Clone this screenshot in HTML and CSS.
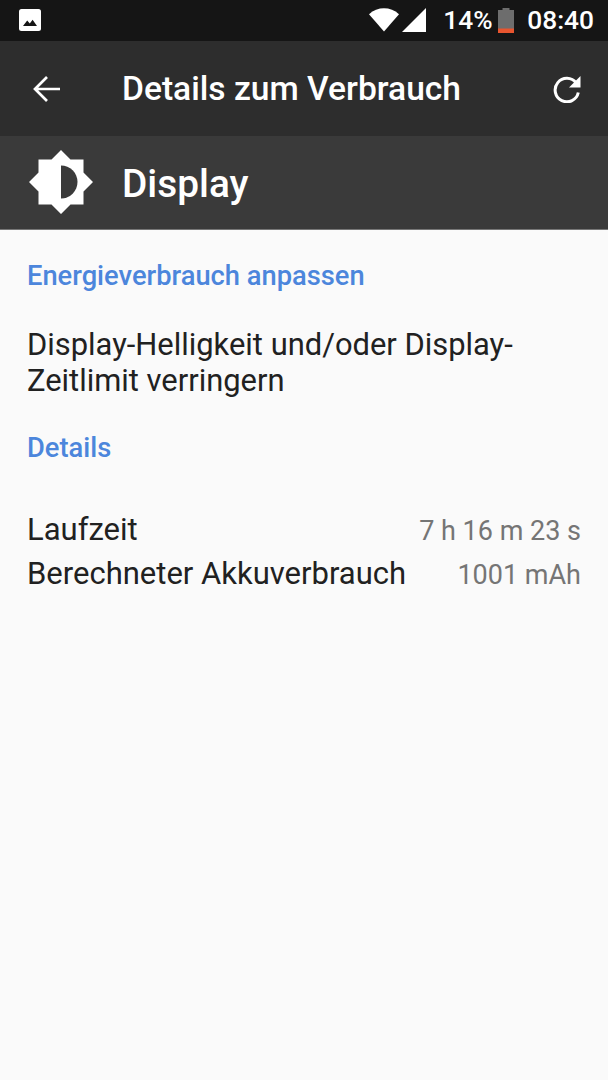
FILE: index.html
```html
<!DOCTYPE html>
<html lang="de">
<head>
<meta charset="utf-8">
<title>Details zum Verbrauch</title>
<link rel="stylesheet" href="styles.css">
</head>
<body>
<div class="statusbar">
  <svg class="ic-image" width="22" height="22" viewBox="0 0 22 22"><rect width="22" height="22" rx="2.5" fill="#fff"/><path d="M4 17 L8.2 11.5 L10.8 14.4 L13.6 10.8 L18 17 Z" fill="#151515"/></svg>
  <div class="status-right">
    <svg class="ic-wifi" width="30" height="24" viewBox="0 0 30 24"><path d="M0 6.2 C8.5 -1.6 21.5 -1.6 30 6.2 L15 23.5 Z" fill="#fff"/></svg>
    <svg class="ic-signal" width="24" height="24" viewBox="0 0 24 24"><path d="M0 24 L24 0 V24 Z" fill="#fff"/></svg>
    <span class="pct">14%</span>
    <svg class="ic-batt" width="16" height="25" viewBox="0 0 16 25"><path d="M4.5 0 H11.5 V2 H16 V25 H0 V2 H4.5 Z" fill="#6d6d6d"/><rect y="20.500" width="16" height="4.500" fill="#e8552f"/></svg>
    <span class="clock">08:40</span>
  </div>
</div>
<header class="toolbar">
  <svg class="ic-back" width="28" height="28" viewBox="0 0 28 28"><path d="M27 14 H2.500 M14 2 L2 14 L14 26" fill="none" stroke="#fff" stroke-width="2.700"/></svg>
  <h1 class="title">Details zum Verbrauch</h1>
  <svg class="ic-refresh" width="28" height="28" viewBox="0 0 28 28"><path d="M23.200 8 A11.700 11.700 0 1 0 25.300 17.500" fill="none" stroke="#fff" stroke-width="3"/><path d="M27.500 1 V12.500 H16 Z" fill="#fff"/></svg>
</header>
<section class="appbar">
  <svg class="ic-sun" width="64" height="64" viewBox="0 0 64 64"><path d="M32 0 L41.500 9.500 H54.500 V22.500 L64 32 L54.500 41.500 V54.500 H41.500 L32 64 L22.500 54.500 H9.500 V41.500 L0 32 L9.500 22.500 V9.500 H22.500 Z" fill="#fff"/><path d="M32 15.500 A16.500 16.500 0 0 1 32 48.500 Z" fill="#3a3a3a"/></svg>
  <h2 class="app-name">Display</h2>
</section>
<main class="content">
  <h3 class="section-head first">Energieverbrauch anpassen</h3>
  <p class="tip">Display-Helligkeit und/oder Display-<br>Zeitlimit verringern</p>
  <h3 class="section-head second">Details</h3>
  <div class="rows">
    <div class="row"><span class="label">Laufzeit</span><span class="value">7 h 16 m 23 s</span></div>
    <div class="row"><span class="label">Berechneter Akkuverbrauch</span><span class="value">1001 mAh</span></div>
  </div>
</main>
</body>
</html>
```
FILE: styles.css
```css
* { box-sizing: border-box; }
html, body { margin: 0; padding: 0; }
body {
  width: 608px;
  height: 1080px;
  overflow: hidden;
  background: #fafafa;
  font-family: Roboto, "Liberation Sans", sans-serif;
  display: flex;
  flex-direction: column;
}
.statusbar {
  height: 41px;
  background: #151515;
  display: flex;
  align-items: center;
  justify-content: space-between;
  padding: 0 14px 1px 19px;
  color: #fff;
}
.status-right { display: flex; align-items: center; }
.ic-wifi { margin-right: 3px; }
.pct { font-size: 26.300px; font-weight: 500; margin-left: 17px; width: 48px; white-space: nowrap; }
.ic-batt { margin-left: 7px; }
.clock { font-size: 26.300px; font-weight: 500; margin-left: 13px; }
.toolbar {
  height: 95px;
  background: #2d2d2d;
  display: flex;
  align-items: center;
  padding: 0 27px 0 33px;
}
.ic-back { flex: none; }
.title {
  margin: 0 0 0 61px;
  flex: 1;
  color: #fff;
  font-size: 33.600px;
  font-weight: 500;
}
.ic-refresh { flex: none; }
.appbar {
  height: 94px;
  background: #3a3a3a;
  display: flex;
  align-items: center;
  padding: 0 0 2px 29px;
  border-bottom: 1px solid #777;
}
.app-name {
  margin: 4px 0 0 29px;
  color: #fff;
  font-size: 38.800px;
  font-weight: 500;
}
.content { padding: 0 27px; flex: 1; }
.section-head {
  margin: 0;
  color: #4c86dc;
  font-size: 27.300px;
  font-weight: 500;
  line-height: 30px;
}
.section-head.first { margin-top: 31px; }
.section-head.second { margin-top: 34px; }
.tip {
  margin: 36px 0 0;
  color: #212121;
  font-size: 30.900px;
  line-height: 36px;
}
.rows { margin-top: 45px; }
.row {
  display: flex;
  justify-content: space-between;
  align-items: baseline;
  height: 44px;
  line-height: 44px;
}
.label { color: #212121; font-size: 31px; }
.value { color: #757575; font-size: 27px; }
```
